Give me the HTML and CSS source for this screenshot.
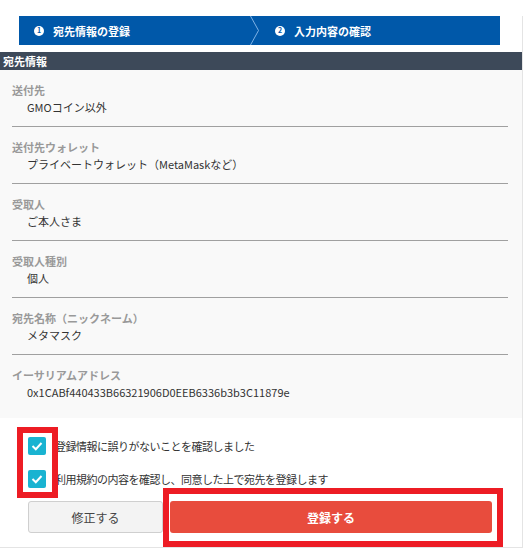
FILE: index.html
```html
<!DOCTYPE html>
<html lang="ja">

<head>
  <meta charset="UTF-8" />
  <meta name="viewport" content="width=device-width, initial-scale=1.0" />
  <title>宛先の登録</title>
  <link rel="stylesheet" href="styles.css">
</head>

<body>
  <div class="page">
    <div class="steps">
      <div class="step step-first">
        <span class="step-num">1</span>
        <span>宛先情報の登録</span>
      </div>
      <svg class="step-arrow" width="9" height="29" viewBox="0 0 9 29">
        <polyline points="0.5,0 8.5,14.5 0.5,29" fill="none" stroke="#7fb2e5" stroke-width="1" />
      </svg>
      <div class="step step-second">
        <span class="step-num">2</span>
        <span>入力内容の確認</span>
      </div>
    </div>

    <div class="section-title">宛先情報</div>

    <div class="fields">
      <div class="field">
        <div class="field-label">送付先</div>
        <div class="field-value">GMOコイン以外</div>
      </div>
      <div class="field">
        <div class="field-label">送付先ウォレット</div>
        <div class="field-value">プライベートウォレット（MetaMaskなど）</div>
      </div>
      <div class="field">
        <div class="field-label">受取人</div>
        <div class="field-value">ご本人さま</div>
      </div>
      <div class="field">
        <div class="field-label">受取人種別</div>
        <div class="field-value">個人</div>
      </div>
      <div class="field">
        <div class="field-label">宛先名称（ニックネーム）</div>
        <div class="field-value">メタマスク</div>
      </div>
      <div class="field">
        <div class="field-label">イーサリアムアドレス</div>
        <div class="field-value">0x1CABf440433B66321906D0EEB6336b3b3C11879e</div>
      </div>
    </div>

    <div class="confirm">
      <label class="check-row">
        <span class="check-box">
          <svg width="18" height="18" viewBox="0 0 18 18">
            <polyline points="4.5,9 7.8,12.2 13.5,6" fill="none" stroke="#fff" stroke-width="2" />
          </svg>
        </span>
        <span class="check-text">登録情報に誤りがないことを確認しました</span>
      </label>
      <label class="check-row">
        <span class="check-box">
          <svg width="18" height="18" viewBox="0 0 18 18">
            <polyline points="4.5,9 7.8,12.2 13.5,6" fill="none" stroke="#fff" stroke-width="2" />
          </svg>
        </span>
        <span class="check-text">利用規約の内容を確認し、同意した上で宛先を登録します</span>
      </label>

      <div class="buttons">
        <button class="btn btn-back">修正する</button>
        <button class="btn btn-submit">登録する</button>
      </div>

      <!-- 注釈の赤枠 -->
      <div class="mark mark-checks"></div>
      <div class="mark mark-submit"></div>
    </div>
  </div>
</body>

</html>
```

FILE: styles.css
```css
body {
  margin: 0;
  padding: 0;
  font-family: "Noto Sans CJK JP", "Noto Sans", sans-serif;
  color: #333;
  background: #fff;
}

.page {
  width: 522px;
  border-right: 1px solid #e4e4e4;
  border-bottom: 1px solid #e4e4e4;
}

.steps {
  display: flex;
  height: 29px;
  margin: 16px 22px 7px 19px;
  background-color: #0058a9;
  color: #fff;
  font-size: 11px;
  font-weight: bold;
}

.step {
  display: flex;
  align-items: center;
  gap: 9px;
}

.step-first {
  width: 216px;
  padding-left: 15px;
}

.step-second {
  padding-left: 16px;
}

.step-num {
  display: flex;
  justify-content: center;
  align-items: center;
  width: 10px;
  height: 10px;
  border-radius: 50%;
  background: #fff;
  color: #0058a9;
  font-size: 7px;
  line-height: 1;
}

.step-arrow {
  display: block;
}

.section-title {
  height: 18px;
  line-height: 18px;
  padding-left: 3px;
  background-color: #3d4959;
  color: #fff;
  font-size: 11px;
  font-weight: bold;
}

.fields {
  background-color: #f9f9f9;
  padding: 0 14px 7px 12px;
}

.field {
  padding: 13px 0 12px;
  border-bottom: 1px solid #a0a0a0;
}

.field:last-child {
  border-bottom: none;
}

.field-label {
  height: 14px;
  line-height: 14px;
  font-size: 11px;
  font-weight: bold;
  color: #999;
}

.field-value {
  height: 14px;
  line-height: 14px;
  margin-top: 3px;
  padding-left: 15px;
  font-size: 11px;
  color: #333;
}

.confirm {
  position: relative;
  padding: 19px 30px 14px 28px;
}

.check-row {
  display: flex;
  align-items: center;
  gap: 9px;
  height: 18px;
  margin-bottom: 15px;
}

.check-box {
  width: 18px;
  height: 18px;
  border-radius: 2px;
  background-color: #19b3d1;
}

.check-box svg {
  display: block;
}

.check-text {
  font-size: 11px;
  letter-spacing: -0.5px;
  color: #333;
}

.buttons {
  display: flex;
  gap: 7px;
  margin-top: -2px;
}

.btn {
  height: 32px;
  border-radius: 3px;
  font-family: inherit;
  font-size: 12px;
  cursor: pointer;
}

.btn-back {
  width: 135px;
  background-color: #f3f3f3;
  border: 1px solid #cfcfcf;
  color: #444;
}

.btn-submit {
  flex: 1;
  background-color: #e84c3d;
  border: none;
  color: #fff;
  font-weight: bold;
}

.mark {
  position: absolute;
  border: 6px solid #ed1c24;
  box-sizing: border-box;
}

.mark-checks {
  left: 17px;
  top: 9px;
  width: 41px;
  height: 71px;
}

.mark-submit {
  left: 163px;
  top: 70px;
  width: 340px;
  height: 59px;
}
```
